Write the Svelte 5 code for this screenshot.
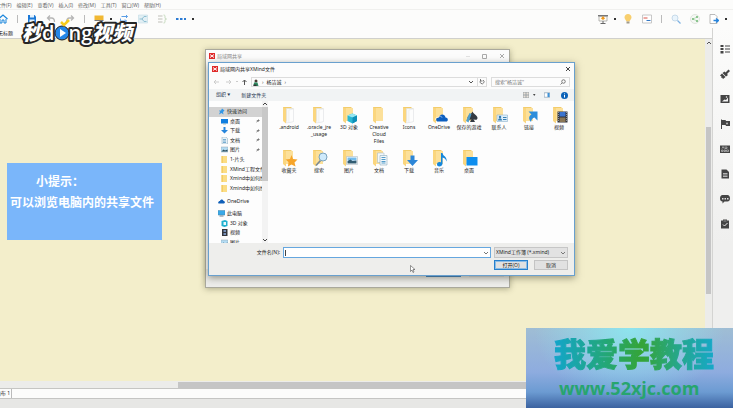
<script>
  let fileName = $state('');
  let query = $state('');
  let current = $state('quick');

  const menus = ['文件(F)', '编辑(E)', '查看(V)', '插入(I)', '修改(M)', '工具(T)', '窗口(W)', '帮助(H)'];

  const leftTools = ['home', '|', 'save', 'undo', 'redo', '|', 'topic', '.', 'relation', 'boundary', 'summary', 'more', '.'];
  const rightTools = ['present', '.', 'bulb', 'gantt', '|', 'search', 'share', 'export', '.'];
  const panels = ['outline', 'brush', 'image', 'flag', 'label', 'notes', 'comment', 'task'];

  const quickItems = [
    { icon: 'desktop', text: '桌面', pinned: true },
    { icon: 'download', text: '下载', pinned: true },
    { icon: 'document', text: '文档', pinned: true },
    { icon: 'picture', text: '图片', pinned: true },
    { icon: 'folder', text: '1-片头' },
    { icon: 'folder', text: 'XMind工程文件' },
    { icon: 'folder', text: 'Xmind中如何绘' },
    { icon: 'folder', text: 'Xmind中如何绘' }
  ];

  const pcItems = [
    { icon: 'cube', text: '3D 对象' },
    { icon: 'film', text: '视频' },
    { icon: 'picture', text: '图片' }
  ];

  const files = [
    { kind: 'paper', text: '.android' },
    { kind: 'paper', text: '.oracle_jre\n_usage' },
    { kind: 'cube', text: '3D 对象' },
    { kind: 'plain', text: 'Creative\nCloud\nFiles' },
    { kind: 'paper', text: 'Icons' },
    { kind: 'cloud', text: 'OneDrive' },
    { kind: 'spade', text: '保存的游戏' },
    { kind: 'card', text: '联系人' },
    { kind: 'link', text: '链接' },
    { kind: 'film', text: '视频' },
    { kind: 'star', text: '收藏夹' },
    { kind: 'lens', text: '搜索' },
    { kind: 'photo', text: '图片' },
    { kind: 'doc', text: '文档' },
    { kind: 'down', text: '下载' },
    { kind: 'note', text: '音乐' },
    { kind: 'desk', text: '桌面' }
  ];
</script>

{#snippet tool(name)}
  <svg viewBox="0 0 20 20" width="10" height="10" fill="none" aria-hidden="true">
    {#if name === 'home'}
      <path d="M1 10 10 2l9 8" stroke="#1b86dc" stroke-width="2.4" />
      <path d="M4 10v8h4v-6h4v6h4v-8" stroke="#1b86dc" stroke-width="2" />
    {:else if name === 'save'}
      <path d="M2 2h13l3 3v13H2z" fill="#1a78d6" />
      <path d="M6 2h8v5H6zM5 11h10v7H5z" fill="#e4f1fc" />
    {:else if name === 'undo'}
      <path d="M8 3 3 8l5 5M3 8h8c4 0 6 3 6 8" stroke="#b5b5b5" stroke-width="2.6" />
    {:else if name === 'redo'}
      <path d="m12 3 5 5-5 5M17 8H9c-4 0-6 3-6 8" stroke="#b5b5b5" stroke-width="2.6" />
    {:else if name === 'topic'}
      <path d="M1 3h18v9H1z" fill="#f1b833" />
      <path d="M1 12h18v2H1z" fill="#777" />
      <path d="M7 17h6" stroke="#999" stroke-width="2" />
    {:else if name === 'relation'}
      <path d="M5 5h12l-3-3M17 5l-3 3M15 14H3V9M15 14l-3-3M15 14l-3 3" stroke="#5a9ee6" stroke-width="2" />
    {:else if name === 'boundary'}
      <path d="M1 2h18v16H1z" fill="#e2eff4" stroke="#b9d6e1" />
      <path d="M3 10h5l4-5h5M8 10l4 5h5" stroke="#8fbfd2" stroke-width="2" />
    {:else if name === 'summary'}
      <path d="M2 4h9M2 10h9M2 16h9" stroke="#d4d4d0" stroke-width="3" />
      <path d="M13 2c3 0 3 1 3 4s0 4 3 4c-3 0-3 1-3 4s0 4-3 4" stroke="#b4cfab" stroke-width="1.5" />
    {:else if name === 'more'}
      <path d="M0 8h5v4H0zM8 8h5v4H8zM16 8h4v4h-4z" fill="#2b7bd4" />
    {:else if name === 'present'}
      <path d="M0 2h20v3H0z" fill="#777" />
      <path d="M2 5h16v9H2z" fill="#fffdf4" stroke="#999" stroke-width="1.4" />
      <path d="M10 4 14 9 10 12 6 9z" fill="#f09a20" />
      <path d="M10 14v4M5 19h10" stroke="#666" stroke-width="2" />
    {:else if name === 'bulb'}
      <path d="M10 0c4 0 7 3 7 7 0 3-3 5-4 8H7C6 12 3 10 3 7c0-4 3-7 7-7z" fill="#f8cf6e" />
      <path d="M7 15h6v4H7z" fill="#a09a8b" />
    {:else if name === 'gantt'}
      <path d="M1 2h18v16H1z" fill="#fff" stroke="#bbb" stroke-width="1.6" />
      <path d="M3 8h8" stroke="#dc5548" stroke-width="2" />
      <path d="M9 13h8" stroke="#3478c4" stroke-width="2" />
    {:else if name === 'search'}
      <circle cx="8" cy="8" r="6" fill="#e9f4fc" stroke="#bdd3e4" stroke-width="1.6" />
      <path d="m13 13 6 6" stroke="#7db2e2" stroke-width="2.6" />
    {:else if name === 'share'}
      <circle cx="10" cy="10" r="9" fill="#f5f8f4" stroke="#d5dbd3" stroke-width="1.4" />
      <path d="m14 6-8 4 8 4" stroke="#a3cfa5" stroke-width="1.4" />
      <path d="M12 4h4v4h-4zM4 8h4v4H4zM12 12h4v4h-4z" fill="#8cc690" />
    {:else if name === 'export'}
      <path d="M2 1h10l4 4v14H2z" fill="#fff" stroke="#aaa" stroke-width="1.6" />
      <path d="M9 13h9m-4-4 5 4-5 4" stroke="#2784dc" stroke-width="2.6" />
    {:else if name === 'outline'}
      <path d="M1 2h6v4H1zM1 8h6v4H1zM1 14h6v5H1zM10 3h10v2H10zM10 9h10v2H10zM10 15h10v2H10z" fill="#444" />
    {:else if name === 'brush'}
      <path d="m17 1 3 3-6 6 2 2-4 3-7-7 4-3 2 2zM4 9l7 7-5 4-2-3-2 1 1-3-3-2z" fill="#444" />
    {:else if name === 'image'}
      <path d="M1 2h18v16H1z" fill="#444" />
      <path d="m4 15 5-4 3 1 4-5v8z" fill="#f5f5f5" />
      <circle cx="13" cy="6" r="1.5" fill="#f5f5f5" />
    {:else if name === 'flag'}
      <path d="M2 1h2v19H2zM4 2h7l1 2h8v10h-8l-1-2H4z" fill="#444" />
      <circle cx="14" cy="9" r="2" fill="#bbb" />
    {:else if name === 'label'}
      <path d="M0 3h20v15H0z" fill="#444" />
      <path d="m4 9 2-4 2 4M10 5v4h4V6h-3M3 12h3v3H3zM8 12h3v3H8zM13 12h4v3h-4z" stroke="#e6e6e6" />
    {:else if name === 'notes'}
      <path d="M3 1h10l5 5v13H3z" fill="#444" />
      <path d="M6 9h9M6 12h9M6 15h9" stroke="#e6e6e6" stroke-width="1.4" />
    {:else if name === 'comment'}
      <path d="M5 2h10c3 0 5 3 5 7s-2 6-5 6H9l-4 4v-4c-3 0-5-2-5-6s2-7 5-7z" fill="#444" />
      <path d="M4 8h3v3H4zM9 8h3v3H9zM14 8h3v3h-3z" fill="#ddd" />
    {:else}
      <path d="M2 3h4V1h8v2h4v16H2z" fill="#444" />
      <path d="M7 4h6" stroke="#ddd" />
      <path d="m6 11 3 3 6-6" stroke="#eee" stroke-width="2" />
    {/if}
  </svg>
{/snippet}

{#snippet small(name)}
  <svg viewBox="0 0 14 14" width="7" height="7" fill="none" aria-hidden="true">
    {#if name === 'star'}
      <path d="m8 1 5 4-3 3 1 5-4-3-5 3 2-5-2-3h4z" fill="#3397e6" />
    {:else if name === 'desktop'}
      <path d="M0 2h14v9H0z" fill="#0f7ee0" />
      <path d="M4 12h6" stroke="#8aa" stroke-width="1.5" />
    {:else if name === 'download'}
      <path d="M5 0h4v6h5l-7 7-7-7h5z" fill="#2685dc" />
    {:else if name === 'document'}
      <path d="M2 0h8l3 3v11H2z" fill="#e8f2f8" stroke="#86a7bb" />
      <path d="M4 5h6M4 8h6M4 11h6" stroke="#468fc0" stroke-width="1.4" />
    {:else if name === 'picture'}
      <path d="M0 2h14v10H0z" fill="#b4dcf3" stroke="#93a7b3" />
      <path d="m1 11 4-4 3 2 5-2v4z" fill="#2f4e5c" />
    {:else if name === 'folder'}
      <path d="M1 0h11v14H1z" fill="#fbdd85" />
      <path d="M1 0h3v14H1z" fill="#f3cc66" />
    {:else if name === 'cloud'}
      <path d="M1 11c-2-3 1-5 3-5 1-4 6-4 7 0 3 0 4 4 1 5z" fill="#0f5fb8" />
    {:else if name === 'pc'}
      <path d="M0 1h14v9H0z" fill="#39a9e8" stroke="#4d86a8" />
      <path d="M3 12h8" stroke="#6b8292" stroke-width="2" />
    {:else if name === 'cube'}
      <path d="m1 2 7-2 5 2v10l-6 2-6-2z" fill="#21b0cf" />
      <path d="M5 4h5v6H5z" fill="#eafafd" />
    {:else if name === 'film'}
      <path d="M2 0h11v14H2z" fill="#33363d" />
      <path d="M5 2h5v4H5zM5 8h5v4H5z" fill="#7891ba" />
    {/if}
  </svg>
{/snippet}

{#snippet folder(kind)}
  <svg viewBox="0 0 36 36" width="18" height="18" fill="none" aria-hidden="true">
    <path d="M6 2h17v27H6z" fill="#f2cc6c" />
    <path d="M11 4h15v26H11z" fill="#fce09a" />
    <path d="m6 2 6 4v29l-6-5z" fill="#fbd67e" />
    {#if kind === 'paper'}
      <path d="M13 5h14v26l-14 3z" fill="#f7f8f8" stroke="#d8dcdf" />
      <path d="m18 8 9-2v25l-9 2z" fill="#fdfdfd" stroke="#e2e4e6" />
    {:else if kind === 'cube'}
      <path d="m15 19 10-4 9 4v11l-9 5-10-5z" fill="#27b7d3" />
      <path d="m15 19 10-4 9 4-9 4z" fill="#95e6f1" />
      <path d="M25 23v12l9-5V19z" fill="#0e8fb9" />
    {:else if kind === 'cloud'}
      <path d="M14 31c-4-5 0-9 4-8 1-8 12-8 13 0 6 0 6 8 1 8z" fill="#0d5fc0" />
      <path d="M11 28c-1-4 2-6 5-5 2-4 7-3 8 0" stroke="#fff" stroke-width="1.2" />
    {:else if kind === 'spade'}
      <path d="M25 11c2 5 10 8 10 13 0 4-5 5-8 2l3 6H20l3-6c-3 3-8 2-8-2 0-5 8-8 10-13z" fill="#333a42" />
      <path d="m12 30 7-16 4 2-6 17z" fill="#4f9ecb" />
    {:else if kind === 'card'}
      <path d="M14 18h21v13H14z" fill="#deeffa" stroke="#7ba7c4" />
      <circle cx="20" cy="22" r="2.5" fill="#397fb3" />
      <path d="M16 29c0-6 8-6 8 0zM26 22h7v2h-7zM26 26h7v2h-7z" fill="#397fb3" />
    {:else if kind === 'link'}
      <path d="M17 11h18v18l-6-6c-4 1-6 4-7 9-6-7-4-12 1-15z" fill="#2c8ddb" />
    {:else if kind === 'film'}
      <path d="M15 11h20v22H15z" fill="#30333a" />
      <path d="M19 12h12v9H19z" fill="#3c75d0" />
      <path d="M19 23h12v9H19z" fill="#8a7756" />
      <path d="M17 12v20M33 12v20" stroke="#aeb5bd" stroke-width="1.5" stroke-dasharray="2 2" />
    {:else if kind === 'star'}
      <path d="m23 12 3 8 9 1-6 6 2 8-8-4-7 4 1-9-6-5 9-1z" fill="#f6a52b" />
    {:else if kind === 'lens'}
      <path d="m21 23-9 10" stroke="#7c8b95" stroke-width="3.5" />
      <circle cx="26" cy="16" r="8" fill="#cfeafb" stroke="#7ba3bd" stroke-width="2" />
    {:else if kind === 'photo'}
      <path d="M13 15h22v16H13z" fill="#fff" stroke="#a3b0b8" />
      <path d="M15 17h18v6H15z" fill="#75bcec" />
      <path d="m15 24 6-3 4 3 8-1v6H15z" fill="#315c72" />
    {:else if kind === 'doc'}
      <path d="M15 8h13v19H15z" fill="#f2f8fb" stroke="#9db5c2" />
      <path d="M20 13h14v19H20z" fill="#f2f8fb" stroke="#789eb3" />
      <path d="M23 17h8M23 21h8M23 25h8M23 28h8" stroke="#569dca" stroke-width="2" />
    {:else if kind === 'down'}
      <path d="M21 13h8v9h7L25 34 14 22h7z" fill="#2c86d8" />
    {:else if kind === 'note'}
      <path d="M22 8h3c1 7 10 7 8 17-1-5-4-7-8-8v12c0 7-11 8-11 2 0-5 5-6 8-4z" fill="#1587dc" />
    {:else if kind === 'desk'}
      <path d="M13 16h22v17H13z" fill="#0e8eef" />
    {/if}
  </svg>
{/snippet}

{#snippet toolRow(items)}
  {#each items as item}
    {#if item === '|'}
      <span class="sep"></span>
    {:else if item === '.'}
      <span class="drop"></span>
    {:else}
      <button class="icon-btn" aria-label={item}>{@render tool(item)}</button>
    {/if}
  {/each}
{/snippet}

{#snippet mark()}
  <svg viewBox="0 0 12 12" width="6" height="6" aria-hidden="true">
    <path d="M0 0h12v12H0z" fill="#e02b2b" />
    <path d="m2 3 4 3 4-3M2 9l4-3 4 3" stroke="#fff" stroke-width="2" fill="none" />
  </svg>
{/snippet}

<div class="app">
  <nav class="menubar">
    {#each menus as menu}
      <button>{menu}</button>
    {/each}
  </nav>

  <div class="toolbar">
    {@render toolRow(leftTools)}
    <span class="spacer"></span>
    {@render toolRow(rightTools)}
  </div>

  <div class="main">
    <div class="editor">
      <div class="tabs"><button>无标题</button></div>
      <div class="sheet">
        <div class="canvas"></div>
        <div class="vscroll">
          <svg viewBox="0 0 6 6" width="6" height="6"><path d="m1 4 2-2 2 2" stroke="#555" fill="none" /></svg>
          <div class="vthumb"></div>
        </div>
      </div>
      <div class="hscroll"><div class="hthumb"></div></div>
    </div>
    <aside class="panels">
      {#each panels as panel}
        <button class="icon-btn" aria-label={panel}>{@render tool(panel)}</button>
      {/each}
    </aside>
  </div>
  <div class="sheets"><button>画布 1</button></div>
  <div class="status"></div>

  <!-- окно общего доступа -->
  <section class="window share">
    <header class="title">
      {@render mark()}<span>局域网共享</span>
      <svg class="controls" viewBox="0 0 44 8" width="44" height="8" fill="none" stroke="#aaa">
        <path d="M4 4.5h4" stroke="#e2e2e2" />
        <path d="M20.5 2.5h4v4h-4z" />
        <path d="m38 2 4 4m0-4-4 4" />
      </svg>
    </header>
    <div class="share-foot"><button class="primary" aria-label="共享"></button><button aria-label="关闭"></button></div>
  </section>

  <!-- диалог выбора файла -->
  <section class="window dialog">
    <header class="title">
      {@render mark()}<span>局域网内共享XMind文件</span>
      <button class="close" aria-label="关闭">
        <svg viewBox="0 0 6 6" width="6" height="6"><path d="m1 1 4 4m0-4-4 4" stroke="#444" fill="none" /></svg>
      </button>
    </header>

    <div class="address">
      <svg viewBox="0 0 36 8" width="36" height="8" fill="none" stroke="#ccc">
        <path d="M7 4H2m2-2L2 4l2 2M14 4h5m-2-2 2 2-2 2M24 3l1 1 1-1" />
        <path d="M32.5 7V2m-2 2 2-2 2 2" stroke="#555" />
      </svg>
      <div class="path">
        <svg viewBox="0 0 12 14" width="6" height="7">
          <circle cx="6" cy="4" r="3" fill="#4a3b32" />
          <path d="M2 7h7l2 7H1z" fill="#2f8a62" />
          <path d="M1 11h6v3H1z" fill="#333" />
        </svg>
        <span class="arrow">›</span>
        <button>杨洁诚</button>
        <span class="arrow">›</span>
        <span class="spacer"></span>
        <svg viewBox="0 0 6 6" width="6" height="6"><path d="m1 2 2 2 2-2" stroke="#555" fill="none" /></svg>
        <button class="refresh" aria-label="刷新">
          <svg viewBox="0 0 12 12" width="6" height="6"><path d="M3 3a4 4 0 1 0 5-1M3 0v4h4" stroke="#555" stroke-width="1.5" fill="none" /></svg>
        </button>
      </div>
      <label class="search">
        <input bind:value={query} placeholder={'搜索"杨洁诚"'} aria-label="搜索" />
        <svg viewBox="0 0 12 12" width="6" height="6" fill="none" stroke="#555" stroke-width="1.5">
          <circle cx="7" cy="5" r="3.5" /><path d="m4 8-3 3" />
        </svg>
      </label>
    </div>

    <div class="commands">
      <button>组织 <span class="tri">▼</span></button>
      <button>新建文件夹</button>
      <span class="spacer"></span>
      <button class="view" aria-label="视图">
        <svg viewBox="0 0 26 12" width="13" height="6">
          <path d="M0 0h12v12H0z" fill="#9da5aa" />
          <path d="M1 1h4v4H1zM7 1h4v4H7zM1 7h4v4H1zM7 7h4v4H7z" fill="#e9e1d8" />
          <path d="m20 4 5 0-2.5 4z" fill="#444" />
        </svg>
      </button>
      <button aria-label="预览窗格">
        <svg viewBox="0 0 12 12" width="6" height="6">
          <path d="M.5 1.5h11v9H.5z" fill="#fff" stroke="#5a7d9a" />
          <path d="M7 2h4v8H7z" fill="#3f93d8" />
        </svg>
      </button>
      <button aria-label="帮助">
        <svg viewBox="0 0 14 14" width="7" height="7">
          <circle cx="7" cy="7" r="7" fill="#0b62b8" />
          <path d="M7 3v1.5M7 6v5" stroke="#fff" stroke-width="2" />
        </svg>
      </button>
    </div>

    <div class="browser">
      <nav class="tree">
        <div class="group quick">
          <button class="root" class:selected={current === 'quick'} onclick={() => (current = 'quick')}>
            {@render small('star')}<span>快速访问</span>
          </button>
          {#each quickItems as item}
            <button>
              {@render small(item.icon)}<span>{item.text}</span>
              {#if item.pinned}
                <svg class="pin" viewBox="0 0 8 8" width="4" height="4"><path d="m4 0 4 4-2 0-2 2-1-1-3 3 2-4-1-1 3-1z" fill="#777" /></svg>
              {/if}
            </button>
          {/each}
        </div>
        <div class="group one">
          <button class="root">{@render small('cloud')}<span>OneDrive</span></button>
        </div>
        <div class="group pc">
          <button class="root">{@render small('pc')}<span>此电脑</span></button>
          {#each pcItems as item}
            <button>{@render small(item.icon)}<span>{item.text}</span></button>
          {/each}
        </div>
      </nav>
      <div class="tree-scroll">
        <svg viewBox="0 0 6 6" width="6" height="6"><path d="m1 4 2-2 2 2" stroke="#444" fill="none" /></svg>
        <div class="tree-thumb"></div>
        <svg viewBox="0 0 6 6" width="6" height="6"><path d="m1 2 2 2 2-2" stroke="#444" fill="none" /></svg>
      </div>
      <div class="files">
        {#each files as file}
          <button class="file">{@render folder(file.kind)}<span>{file.text}</span></button>
        {/each}
      </div>
    </div>

    <footer class="dialog-foot">
      <label for="fname">文件名(N):</label>
      <div class="combo">
        <input id="fname" bind:value={fileName} />
        <svg viewBox="0 0 6 6" width="6" height="6"><path d="m1 2 2 2 2-2" stroke="#777" fill="none" /></svg>
      </div>
      <div class="filter">
        <select aria-label="文件类型"><option>XMind工作簿 (*.xmind)</option></select>
        <svg viewBox="0 0 6 6" width="6" height="6"><path d="m1 2 2 2 2-2" stroke="#777" fill="none" /></svg>
      </div>
      <div class="actions">
        <button class="open">打开(O)</button>
        <button>取消</button>
      </div>
    </footer>
  </section>

  <svg class="cursor" viewBox="0 0 10 16" width="5" height="8"><path d="M1 1v12l3-3 2 5 2-1-2-5h4z" fill="#fff" stroke="#333" /></svg>

  <div class="tip">
    <p class="lead">小提示：</p>
    <p>可以浏览电脑内的共享文件</p>
  </div>

  <svg class="brand" viewBox="0 0 118 34" width="118" height="34">
    <text class="brand-text" x="3" y="24">秒<tspan class="latin">d</tspan><tspan class="latin" dx="14">ng</tspan>视频</text>
    <circle cx="43" cy="17" r="7" fill="#2386e8" stroke="#222" stroke-width="1" />
    <path d="m41 13 6 4-6 4z" fill="#fff" />
    <path d="m42 6 3 3 5-5" stroke="#f7cb1c" stroke-width="2.5" fill="none" />
  </svg>

  <div class="banner">
    <p class="banner-title">我爱学教程</p>
    <p class="banner-url">www.52xjc.com</p>
  </div>
</div>

<style>
  :global(body) {
    margin: 0;
    background: #e7e7e5;
  }

  .app {
    position: relative;
    display: flex;
    flex-direction: column;
    min-height: 100vh;
    overflow: hidden;
    font: 5px/7px "Noto Sans", "Noto Sans CJK SC", sans-serif;
    color: #222;
    background: #fcfcfb;
  }

  .app * {
    box-sizing: border-box;
  }

  button,
  input,
  select {
    margin: 0;
    padding: 0;
    border: 0;
    background: none;
    font: inherit;
    color: inherit;
    white-space: nowrap;
    border-radius: 0;
    outline: none;
  }

  p {
    margin: 0;
  }

  svg {
    display: block;
    flex: none;
  }

  .spacer {
    flex: 1;
  }

  .menubar {
    display: flex;
    gap: 5px;
    height: 10px;
    padding-top: 2px;
    margin-left: -4px;
    color: #666;
    border-bottom: 1px solid #f0f0ee;
  }

  .toolbar {
    display: flex;
    align-items: center;
    gap: 9px;
    height: 18px;
    padding-right: 8px;
    margin-left: -2px;
  }

  .icon-btn {
    width: 10px;
    height: 10px;
  }

  .sep {
    width: 1px;
    height: 8px;
    background: #bbb;
  }

  .drop {
    width: 2px;
    height: 2px;
    margin: 0 -2px 0 -3px;
    background: #333;
  }

  .main {
    display: flex;
    flex: 1;
  }

  .editor {
    display: flex;
    flex: 1;
    flex-direction: column;
    border-right: 1px solid #d4d4d2;
  }

  .tabs {
    height: 11px;
    padding-top: 2px;
    border-bottom: 1px solid #d0d0cc;
  }

  .tabs button {
    display: block;
    margin-left: -2px;
  }

  .sheet {
    display: flex;
    flex: 1;
  }

  .canvas {
    flex: 1;
    background: #f3eecb;
  }

  .vscroll {
    display: flex;
    flex-direction: column;
    width: 7px;
    padding: 1px 0 0 1px;
    background: #ececea;
  }

  .vthumb {
    width: 5px;
    height: 49%;
    margin-top: 81px;
    background: #c5c5c5;
  }

  .hscroll {
    height: 7px;
    padding-top: 1px;
    background: #ececea;
  }

  .hthumb {
    width: 49%;
    height: 6px;
    margin-left: 25%;
    background: #c5c5c5;
  }

  .panels {
    display: flex;
    flex-direction: column;
    align-items: center;
    gap: 15px;
    width: 20px;
    padding: 16px 0 0 3px;
    background: linear-gradient(#fcfcfb, #efefee 60%);
  }

  .sheets {
    height: 11px;
    border-top: 1px solid #c5c5c3;
    border-bottom: 1px solid #c5c5c3;
  }

  .sheets button {
    display: block;
    width: 12px;
    height: 9px;
    padding-right: 1px;
    border-right: 1px solid #bbb;
    display: flex;
    justify-content: flex-end;
    align-items: center;
    overflow: hidden;
  }

  .status {
    height: 9px;
    background: #e7e7e5;
  }

  .window {
    position: absolute;
    display: flex;
    flex-direction: column;
    background: #fcfcfc;
  }

  .share {
    left: 205px;
    top: 49px;
    width: 305px;
    height: 239px;
    border: 1px solid #aaa99d;
    box-shadow: 0 1px 6px rgba(70, 70, 40, 0.4);
    color: #888;
    justify-content: space-between;
  }

  .title {
    display: flex;
    align-items: center;
    gap: 2px;
    height: 12px;
    padding: 0 3px;
  }

  .controls {
    margin-left: auto;
  }

  .share-foot {
    display: flex;
    justify-content: flex-end;
    align-items: flex-start;
    gap: 8px;
    height: 18px;
    padding: 0 5px 0 0;
    background: #ededeb;
  }

  .share-foot button {
    width: 35px;
    height: 8px;
    border-bottom: 1px solid #ddd;
  }

  .share-foot .primary {
    border-bottom: 2px solid #3c84c8;
  }

  .dialog {
    left: 208px;
    top: 62px;
    width: 367px;
    height: 214px;
    border: 1px solid #69a0ce;
    box-shadow: 0 2px 7px rgba(60, 60, 40, 0.5);
  }

  .close {
    margin-left: auto;
  }

  .address {
    display: flex;
    align-items: center;
    gap: 3px;
    height: 14px;
    padding: 0 4px 0 3px;
  }

  .path,
  .search {
    display: flex;
    align-items: center;
    height: 10px;
    border: 1px solid #dcdcdc;
  }

  .path {
    flex: 1;
    gap: 3px;
    padding-left: 1px;
  }

  .arrow {
    color: #444;
  }

  .refresh {
    height: 8px;
    padding: 0 1px;
    border-left: 1px solid #ddd;
  }

  .search {
    width: 79px;
    margin-left: 1px;
    padding: 0 3px;
  }

  .search input {
    flex: 1;
    min-width: 0;
  }

  .search input::placeholder {
    color: #777;
    opacity: 1;
  }

  .commands {
    display: flex;
    align-items: center;
    gap: 11px;
    height: 12px;
    padding: 0 6px 0 7px;
    color: #24364f;
    background: #f1f3f4;
  }

  .view {
    margin-right: -3px;
  }

  .tri {
    font-size: 3px;
  }

  .browser {
    display: flex;
    flex: 1;
    min-height: 0;
    background: #fdfdfd;
  }

  .tree {
    display: flex;
    flex-direction: column;
    gap: 3px;
    width: 54px;
    padding-top: 6px;
    overflow: hidden;
  }

  .group {
    display: grid;
    flex: none;
    grid-auto-rows: 1fr;
  }

  .quick {
    height: 86px;
  }

  .one {
    height: 10px;
  }

  .pc {
    height: 38px;
  }

  .group button {
    display: flex;
    align-items: center;
    gap: 2px;
    min-height: 0;
    padding-left: 12px;
    overflow: hidden;
  }

  .group .root {
    padding-left: 9px;
  }

  .group .selected {
    background: #d2d2d2;
  }

  .pin {
    margin-left: auto;
    margin-right: 2px;
  }

  .tree-scroll {
    display: flex;
    flex-direction: column;
    justify-content: space-between;
    width: 6px;
    background: #f3f3f3;
  }

  .tree-thumb {
    height: 74px;
    margin-bottom: auto;
    background: #c8c8c8;
  }

  .files {
    display: grid;
    flex: 1;
    grid-template-columns: repeat(10, 30px);
    grid-auto-rows: 43px;
    align-content: start;
    padding: 5px 0 0 6px;
  }

  .file {
    display: flex;
    flex-direction: column;
    align-items: center;
  }

  .file span {
    white-space: pre-line;
  }

  .dialog-foot {
    display: grid;
    grid-template-columns: 71px 1fr 74px;
    grid-template-rows: 11px 10px;
    column-gap: 3px;
    row-gap: 2px;
    height: 32px;
    padding: 4px 6px 0 0;
    background: #eeeeec;
  }

  .dialog-foot label {
    padding-top: 2px;
    text-align: right;
  }

  .combo,
  .filter {
    display: flex;
    align-items: center;
    padding-right: 1px;
  }

  .combo {
    border: 1px solid #66a7df;
    background: linear-gradient(#444, #444) 1px 2px / 1px 6px no-repeat #fff;
  }

  .combo input,
  .filter select {
    flex: 1;
    min-width: 0;
    padding-left: 1px;
    appearance: none;
  }

  .filter {
    border: 1px solid #c6c6c6;
    background: #e2e2e2;
  }

  .actions {
    display: flex;
    grid-column: 3;
    gap: 6px;
  }

  .actions button {
    flex: 1;
    border: 1px solid #c4c4c4;
    background: #e1e1e1;
  }

  .actions .open {
    border-color: #2880cc;
    box-shadow: inset 0 0 0 1px #8dbde6;
  }

  .cursor {
    position: absolute;
    left: 410px;
    top: 265px;
  }

  .tip {
    position: absolute;
    left: 7px;
    top: 163px;
    width: 155px;
    height: 77px;
    padding: 8px 3px;
    font-size: 12px;
    line-height: 21px;
    font-weight: 700;
    color: #fff;
    background: #7ab6fa;
    white-space: nowrap;
  }

  .tip .lead {
    padding-left: 26px;
  }

  .brand {
    position: absolute;
    left: 19px;
    top: 16px;
  }

  .brand-text {
    font: italic 900 20px "Noto Sans CJK SC", sans-serif;
    fill: #fff;
    stroke: #262626;
    stroke-width: 4px;
    stroke-linejoin: round;
    paint-order: stroke;
  }

  .latin {
    font-family: "Open Sans", sans-serif;
    font-style: normal;
    font-weight: 600;
  }

  .banner {
    position: absolute;
    right: 0;
    bottom: 0;
    width: 207px;
    height: 80px;
    padding: 5px 0 0 28px;
    white-space: nowrap;
    background:
      radial-gradient(ellipse at 50% 0, rgba(140, 232, 240, 0.9), rgba(140, 210, 236, 0) 65%),
      linear-gradient(#9fbdd4, #8eacdf 55%, #6c9bd2 80%, #3b62a0);
  }

  .banner-title {
    width: 160px;
    font: 900 32px/38px "Noto Sans CJK SC", sans-serif;
    color: transparent;
    -webkit-text-stroke: 1px transparent;
    background: linear-gradient(90deg, #12a5cb, #25a770 35%, #35a436 55%, #25a78c 78%, #16a8c8);
    background-clip: text;
  }

  .banner-url {
    padding-left: 5px;
    font: 700 18px/34px "Open Sans", sans-serif;
    color: #27a56e;
  }
</style>
